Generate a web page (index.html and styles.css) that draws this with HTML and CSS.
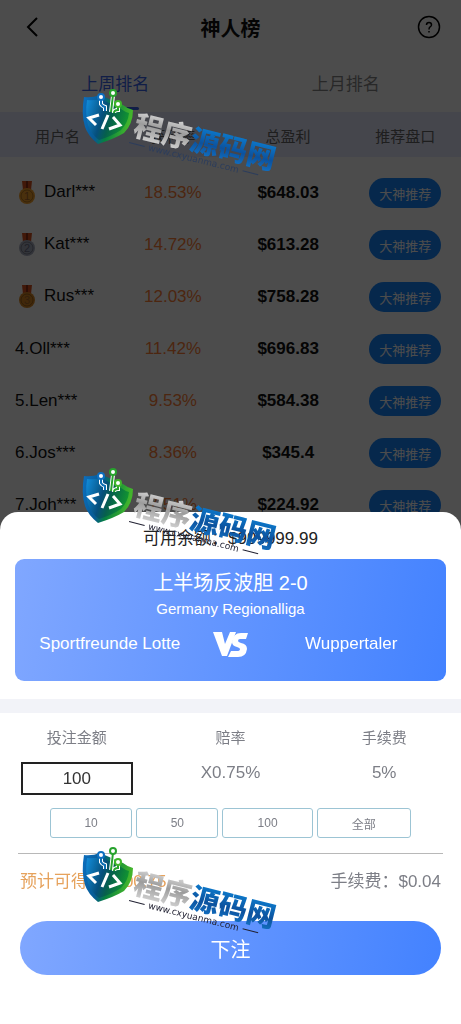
FILE: index.html
```
<!DOCTYPE html>
<html lang="zh-CN">
<head>
<meta charset="utf-8">
<meta name="viewport" content="width=device-width, initial-scale=1">
<title>神人榜</title>
<link rel="stylesheet" href="styles.css">
</head>

<body>
<svg class="defs" width="0" height="0" aria-hidden="true">
    <symbol id="medal" viewBox="0 0 18 24">
        <path d="M4 0H14L13 9H5Z" fill="#d9531e"/>
        <path d="M8 0H10V8H8Z" fill="#8f2f16"/>
        <circle cx="9" cy="15" r="8" fill="currentColor"/>
        <circle cx="9" cy="15" r="6" fill="none" stroke="#00000040" stroke-width="1"/>
    </symbol>
</svg>

<div class="page">
    <header class="topbar">
        <button class="icon-btn" aria-label="返回">
            <svg width="24" height="24" viewBox="0 0 24 24"><path d="M17 3L8 12L17 21" fill="none" stroke="#000" stroke-width="2"/></svg>
        </button>
        <h1>神人榜</h1>
        <button class="icon-btn" aria-label="帮助">
            <svg width="24" height="24" viewBox="0 0 24 24" fill="none" stroke="#000" stroke-width="1.5">
                <circle cx="12" cy="12" r="10.5"/>
                <path d="M9.500 10Q9.500 7.500 12 7.500Q14.500 7.500 14.500 10Q14.500 11 13 12Q12 12.500 12 14.500M12 16V17.500"/>
            </svg>
        </button>
    </header>

    <nav class="tabs">
        <a href="#week" class="tab active">上周排名</a>
        <a href="#month" class="tab">上月排名</a>
    </nav>

    <table class="rank">
        <thead>
            <tr><th>用户名</th><th>获利率</th><th>总盈利</th><th class="tip">推荐盘口</th></tr>
        </thead>
        <tbody>
            <tr>
                <td class="name"><svg class="medal gold"><use href="#medal"/><text x="6" y="19">1</text></svg>Darl***</td>
                <td class="rate">18.53%</td>
                <td class="profit">$648.03</td>
                <td class="tip"><button class="pill">大神推荐</button></td>
            </tr>
            <tr>
                <td class="name"><svg class="medal silver"><use href="#medal"/><text x="6" y="19">2</text></svg>Kat***</td>
                <td class="rate">14.72%</td>
                <td class="profit">$613.28</td>
                <td class="tip"><button class="pill">大神推荐</button></td>
            </tr>
            <tr>
                <td class="name"><svg class="medal bronze"><use href="#medal"/><text x="6" y="19">3</text></svg>Rus***</td>
                <td class="rate">12.03%</td>
                <td class="profit">$758.28</td>
                <td class="tip"><button class="pill">大神推荐</button></td>
            </tr>
            <tr>
                <td class="name">4.Oll***</td>
                <td class="rate">11.42%</td>
                <td class="profit">$696.83</td>
                <td class="tip"><button class="pill">大神推荐</button></td>
            </tr>
            <tr>
                <td class="name">5.Len***</td>
                <td class="rate">9.53%</td>
                <td class="profit">$584.38</td>
                <td class="tip"><button class="pill">大神推荐</button></td>
            </tr>
            <tr>
                <td class="name">6.Jos***</td>
                <td class="rate">8.36%</td>
                <td class="profit">$345.4</td>
                <td class="tip"><button class="pill">大神推荐</button></td>
            </tr>
            <tr>
                <td class="name">7.Joh***</td>
                <td class="rate">7.51%</td>
                <td class="profit">$224.92</td>
                <td class="tip"><button class="pill">大神推荐</button></td>
            </tr>
        </tbody>
    </table>
</div>

<div class="overlay">
    <form class="sheet">
        <p class="balance">可用余额：$999999.99</p>

        <section class="match">
            <h2>上半场反波胆 2-0</h2>
            <p class="league">Germany Regionalliga</p>
            <div class="teams">
                <span>Sportfreunde Lotte</span>
                <svg width="36" height="28" viewBox="0 0 36 28" role="img" aria-label="VS">
                    <path d="M0 2H9L12 14L17 2H23L14 26H9Z" fill="#fff"/>
                    <path d="M35 3L33 9H27Q25 9 25 11Q25 12 28 13Q34 14 34 19Q33 27 25 27H15L18 21H24Q27 21 27 19Q27 18 24 17Q19 16 19 12Q20 3 28 3Z" fill="#fff"/>
                </svg>
                <span>Wuppertaler</span>
            </div>
        </section>

        <div class="bet">
            <div class="col">
                <label for="amount">投注金额</label>
                <input id="amount" type="text" value="100">
            </div>
            <div class="col">
                <span>赔率</span>
                <span class="value">X0.75%</span>
            </div>
            <div class="col">
                <span>手续费</span>
                <span class="value">5%</span>
            </div>
        </div>

        <div class="quick">
            <button type="button">10</button>
            <button type="button">50</button>
            <button type="button">100</button>
            <button type="button">全部</button>
        </div>

        <div class="total">
            <span class="win">预计可得：$100.75</span>
            <span>手续费：$0.04</span>
        </div>

        <button type="button" class="submit">下注</button>
    </form>
</div>

<div class="marks">
    <svg class="mark mark-dark" viewBox="0 0 200 92">
        <defs>
            <linearGradient id="shieldFill" x1="0" y1="0" x2="1" y2="0.2">
                <stop offset="0" stop-color="#0c6fc0"/>
                <stop offset="0.4" stop-color="#075a93"/>
                <stop offset="0.6" stop-color="#078040"/>
                <stop offset="1" stop-color="#43b52c"/>
            </linearGradient>
            <linearGradient id="shieldInner" x1="0" y1="0.2" x2="1" y2="0.5">
                <stop offset="0" stop-color="#1187d2"/>
                <stop offset="0.4" stop-color="#064f7c"/>
                <stop offset="0.6" stop-color="#06604c"/>
                <stop offset="1" stop-color="#12982f"/>
            </linearGradient>
            <linearGradient id="silver" x1="0" y1="0" x2="0" y2="1">
                <stop offset="0.1" stop-color="#e4e4e4"/>
                <stop offset="0.5" stop-color="#9c9c9c"/>
                <stop offset="0.9" stop-color="#d0d0d0"/>
            </linearGradient>
            <linearGradient id="blueText" x1="0" y1="0" x2="0" y2="1">
                <stop offset="0.1" stop-color="#0c84d8"/>
                <stop offset="0.6" stop-color="#0c529e"/>
                <stop offset="1" stop-color="#1479cc"/>
            </linearGradient>
        </defs>
        <g id="logo">
            <path d="M4 11Q12 12 20 9L43 19Q48 23 53 24Q53 38 44 47Q34 53 18 58Q8 50 5 41Q1 28 4 11Z" fill="url(#shieldFill)"/>
            <path d="M7 14Q14 15 21 13L41 23Q45 26 49 27Q48 37 41 44Q32 50 19 54Q11 48 8 39Q5 28 7 14Z" fill="url(#shieldInner)"/>
            <path d="M21 14V18Q22 20 25 21V25M33 10L31 26M38 21V24Q34 24 34 27" fill="none" stroke="#fff" stroke-width="4"/>
            <path d="M21 13V18Q22 20 25 21V25" fill="none" stroke="#0c6fb5" stroke-width="2"/>
            <path d="M33 9L31 26M38 20V24Q34 24 34 27" fill="none" stroke="#27a22d" stroke-width="2"/>
            <circle cx="21" cy="11" r="3" fill="#fff" stroke="#0c6fc0" stroke-width="2"/>
            <circle cx="33" cy="7" r="3" fill="#fff" stroke="#27a22d" stroke-width="2"/>
            <circle cx="38" cy="18" r="3" fill="#fff" stroke="#3fb52a" stroke-width="2"/>
            <path d="M19 29L9 32L16 39M28 29L22 43M33 31L40 39L29 43" fill="none" stroke="#fff" stroke-width="3"/>
            <g transform="translate(52 49) rotate(14)">
                <text class="logo-name" x="0" y="0"><tspan fill="url(#silver)">程序</tspan><tspan fill="url(#blueText)">源码网</tspan></text>
                <text class="logo-url" x="19" y="11">www.cxyuanma.com</text>
                <path d="M-1 8H15M116 8H132" stroke="currentColor" stroke-width="1"/>
            </g>
        </g>
    </svg>
    <svg class="mark" viewBox="0 0 200 92"><use href="#logo"/></svg>
    <svg class="mark" viewBox="0 0 200 92"><use href="#logo"/></svg>
</div>
</body>

</html>
```
FILE: styles.css
```
* {
    box-sizing: border-box;
}
body {
    margin: 0;
    background: #fff;
    color: #111;
    font-family: "Liberation Sans", "Noto Sans CJK SC", sans-serif;
    font-size: 17px;
    overflow: hidden;
}
button, input {
    font-family: inherit;
    margin: 0;
    padding: 0;
}
h1, h2, p {
    margin: 0;
    font-weight: normal;
}
.defs {
    position: absolute;
}

/* ranking page */
.topbar {
    display: flex;
    align-items: center;
    justify-content: space-between;
    height: 54px;
    padding: 0 20px;
}
.topbar h1 {
    font-size: 20px;
    font-weight: bold;
}
.icon-btn {
    display: flex;
    background: none;
    border: 0;
}
.tabs {
    display: flex;
    height: 58px;
    padding-top: 17px;
}
.tab {
    flex: 1;
    display: flex;
    flex-direction: column;
    align-items: center;
    gap: 8px;
    line-height: 28px;
    color: #888;
    text-decoration: none;
}
.active {
    color: #3a66ee;
}
.active::after {
    content: "";
    width: 48px;
    height: 3px;
    border-radius: 2px;
    background: #3a66ee;
}
.rank {
    width: 100%;
    table-layout: fixed;
    border-collapse: collapse;
    text-align: center;
}
.rank th {
    height: 45px;
    padding: 2px 0 0;
    background: #e6ebff;
    color: #666;
    font-size: 15px;
    font-weight: normal;
}
.rank td {
    height: 52px;
    padding: 0;
}
.rank tbody::before {
    content: "";
    display: block;
    height: 10px;
}
.rank .name {
    padding-left: 15px;
    text-align: left;
}
.rank .tip {
    padding-left: 4px;
}
.medal {
    width: 18px;
    height: 24px;
    margin: 0 8px 0 3px;
    vertical-align: middle;
}
.medal text {
    font-size: 11px;
    fill: #a8682c;
}
.gold {
    color: #f5a02c;
}
.silver {
    color: #a8adc0;
}
.silver text {
    fill: #6c7084;
}
.bronze {
    color: #d98824;
}
.rate {
    color: #ff7f38;
}
.profit {
    font-weight: bold;
}
.pill {
    width: 72px;
    height: 30px;
    border: 0;
    border-radius: 15px;
    background: #1585ff;
    color: #fff;
    font-size: 13px;
}

/* bet sheet */
.overlay {
    position: fixed;
    inset: 0;
    display: flex;
    align-items: flex-end;
    background: rgba(0, 0, 0, 0.7);
}
.sheet {
    width: 100%;
    padding: 14px 0 49px;
    border-radius: 18px 18px 0 0;
    background: #fff;
    color: #7c7e86;
}
.balance {
    color: #222;
    line-height: 25px;
    text-align: center;
}
.match {
    height: 122px;
    margin: 8px 15px 18px;
    padding-top: 10px;
    border-radius: 9px;
    background: linear-gradient(100deg, #80a7ff, #4382ff);
    color: #fff;
    text-align: center;
}
.match h2 {
    font-size: 20px;
    line-height: 28px;
}
.league {
    font-size: 15px;
    line-height: 24px;
}
.teams {
    display: grid;
    grid-template-columns: 1fr 36px 1fr;
    align-items: center;
    gap: 8px;
    padding-top: 9px;
}
.bet {
    display: flex;
    padding-top: 13px;
    border-top: 14px solid #f2f3f8;
}
.col {
    flex: 1;
    display: flex;
    flex-direction: column;
    align-items: center;
    font-size: 15px;
    line-height: 24px;
}
.col input {
    width: 112px;
    height: 33px;
    margin-top: 12px;
    border: 2px solid #222;
    background: #fff;
    color: #333;
    font-size: 17px;
    text-align: center;
}
.value {
    margin-top: 11px;
    font-size: 17px;
}
.quick {
    display: grid;
    grid-template-columns: 82fr 82fr 90fr 94fr;
    gap: 4px;
    padding: 13px 50px 15px;
}
.quick button {
    height: 30px;
    border: 1px solid #9cc4d4;
    border-radius: 3px;
    background: #fff;
    color: #7c7e86;
    font-size: 12px;
}
.total {
    display: flex;
    justify-content: space-between;
    margin: 0 18px;
    padding: 15px 2px 27px;
    border-top: 1px solid #b8b8b8;
    line-height: 25px;
}
.win {
    color: #e6a25c;
}
.submit {
    display: block;
    width: calc(100% - 40px);
    height: 54px;
    margin: 0 20px;
    border: 0;
    border-radius: 27px;
    background: linear-gradient(100deg, #80a7ff, #4382ff);
    color: #fff;
    font-size: 20px;
}

/* site logo laid over the page */
.marks {
    position: fixed;
    top: 86px;
    left: 80px;
    display: flex;
    flex-direction: column;
    gap: 287px;
    pointer-events: none;
}
.mark {
    width: 200px;
    height: 92px;
    color: #223;
}
.mark-dark {
    color: #2c3d5c;
}
.logo-name {
    font-family: "Noto Sans CJK SC", sans-serif;
    font-size: 29px;
    font-weight: 900;
}
.logo-url {
    font-family: "DejaVu Sans", sans-serif;
    font-size: 9px;
    fill: currentColor;
}
```
